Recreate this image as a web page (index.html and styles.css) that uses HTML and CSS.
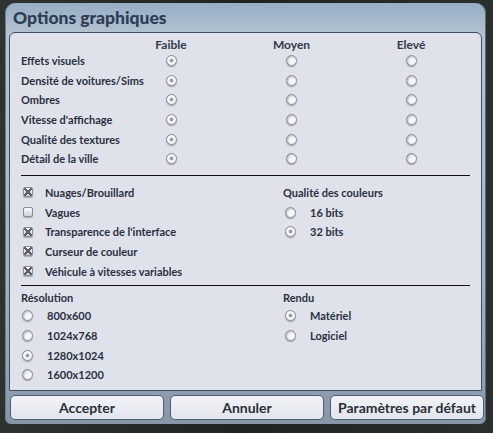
FILE: index.html
```html
<!DOCTYPE html>
<html lang="fr">
<head>
    <meta charset="UTF-8">
    <title>Options graphiques</title>
    <link rel="stylesheet" href="styles.css">
</head>
<body>
    <div class="window">
        <div class="frame">
            <h1 class="title">Options graphiques</h1>
            <div class="panel">
                <div class="quality">
                    <span></span>
                    <span class="colhead">Faible</span>
                    <span class="colhead">Moyen</span>
                    <span class="colhead">Elevé</span>

                    <span class="label">Effets visuels</span>
                    <span class="cell"><i class="radio on"></i></span>
                    <span class="cell"><i class="radio"></i></span>
                    <span class="cell"><i class="radio"></i></span>

                    <span class="label">Densité de voitures/Sims</span>
                    <span class="cell"><i class="radio on"></i></span>
                    <span class="cell"><i class="radio"></i></span>
                    <span class="cell"><i class="radio"></i></span>

                    <span class="label">Ombres</span>
                    <span class="cell"><i class="radio on"></i></span>
                    <span class="cell"><i class="radio"></i></span>
                    <span class="cell"><i class="radio"></i></span>

                    <span class="label">Vitesse d'affichage</span>
                    <span class="cell"><i class="radio on"></i></span>
                    <span class="cell"><i class="radio"></i></span>
                    <span class="cell"><i class="radio"></i></span>

                    <span class="label">Qualité des textures</span>
                    <span class="cell"><i class="radio on"></i></span>
                    <span class="cell"><i class="radio"></i></span>
                    <span class="cell"><i class="radio"></i></span>

                    <span class="label">Détail de la ville</span>
                    <span class="cell"><i class="radio on"></i></span>
                    <span class="cell"><i class="radio"></i></span>
                    <span class="cell"><i class="radio"></i></span>
                </div>

                <hr class="sep">

                <div class="split checks">
                    <div class="col">
                        <div class="row"><i class="box on"></i>Nuages/Brouillard</div>
                        <div class="row"><i class="box"></i>Vagues</div>
                        <div class="row"><i class="box on"></i>Transparence de l'interface</div>
                        <div class="row"><i class="box on"></i>Curseur de couleur</div>
                        <div class="row"><i class="box on"></i>Véhicule à vitesses variables</div>
                    </div>
                    <div class="col">
                        <div class="row">Qualité des couleurs</div>
                        <div class="row opt"><i class="radio"></i>16 bits</div>
                        <div class="row opt"><i class="radio on"></i>32 bits</div>
                    </div>
                </div>

                <hr class="sep sep-low">

                <div class="split lower">
                    <div class="col">
                        <div class="row head">Résolution</div>
                        <div class="row res"><i class="radio"></i>800x600</div>
                        <div class="row res"><i class="radio"></i>1024x768</div>
                        <div class="row res"><i class="radio on"></i>1280x1024</div>
                        <div class="row res"><i class="radio"></i>1600x1200</div>
                    </div>
                    <div class="col">
                        <div class="row head">Rendu</div>
                        <div class="row opt"><i class="radio on"></i>Matériel</div>
                        <div class="row opt"><i class="radio"></i>Logiciel</div>
                    </div>
                </div>
            </div>
            <div class="buttons">
                <button type="button">Accepter</button>
                <button type="button">Annuler</button>
                <button type="button">Paramètres par défaut</button>
            </div>
        </div>
    </div>
</body>
</html>
```

FILE: styles.css
```css
body {
    margin: 0;
    background: #232827;
    font-family: Lato, "Open Sans", sans-serif;
}

.window {
    width: 493px;
    height: 433px;
    padding-top: 3px;
    box-sizing: border-box;
    background: linear-gradient(to right, #2c3331, #1f2422 50%, #2a302e);
}

.frame {
    margin: 0 7px 0 5px;
    height: 421px;
    border-radius: 10px 10px 6px 6px;
    background: linear-gradient(#98aec3, #b4c4d2 8%, #a5b5c5 60%, #8797a9);
    box-shadow: inset 1px 0 0 #6c7d90, inset -1px 0 0 #5a6a7c;
}

.title {
    margin: 0;
    height: 29px;
    padding-left: 8px;
    font-size: 17.5px;
    line-height: 30px;
    font-weight: 900;
    color: #2d3c55;
}

.panel {
    margin: 0 4px;
    height: 359px;
    box-sizing: border-box;
    padding: 4px 11px 0 11px;
    border: 1px solid #3f4e64;
    border-radius: 6px 6px 0 0;
    background: #dfe2ea;
    color: #2a3042;
    font-size: 11px;
    font-weight: 700;
}

/* quality table */
.quality {
    display: grid;
    grid-template-columns: 90px 120px 121px 1fr;
    grid-template-rows: 14px;
    grid-auto-rows: 19.6px;
    align-items: center;
}

.colhead {
    text-align: center;
    font-size: 12px;
    color: #333a4a;
}

.label {
    white-space: nowrap;
}

.cell {
    display: flex;
    justify-content: center;
}

.radio {
    display: inline-block;
    flex: none;
    box-sizing: border-box;
    width: 11px;
    height: 11px;
    border: 1px solid #8c8f97;
    border-radius: 50%;
    background: radial-gradient(circle at 62% 62%, #f6f6f8 0 38%, #c2c5cb 70%, #a2a5ac 100%);
    box-shadow: 0 1px 1px rgba(0, 0, 0, 0.3);
}

.radio.on {
    background: radial-gradient(circle, #9a9da4 0 24%, #f7f7f9 36% 62%, #bec1c7 85%);
}

.sep {
    margin: 6px 0 0;
    border: none;
    height: 1px;
    background: #111;
}

.sep-low {
    margin-top: 4px;
}

.split {
    display: grid;
    grid-template-columns: 262px 1fr;
}

.checks {
    padding-top: 7px;
}

.lower {
    padding-top: 2px;
}

.row {
    display: flex;
    align-items: center;
    height: 19.7px;
    white-space: nowrap;
}

.row.head {
    height: 18px;
}

.box {
    width: 8px;
    height: 8px;
    margin: 0 12px 0 2px;
    border: 1px solid #8a8d95;
    border-radius: 2px;
    background: linear-gradient(#fbfbfc, #cdd0d6);
    box-shadow: 0 1px 1px rgba(0, 0, 0, 0.25);
}

.box.on {
    background:
        linear-gradient(45deg, transparent 40%, #5c5f67 40% 58%, transparent 58%),
        linear-gradient(-45deg, transparent 40%, #5c5f67 40% 58%, transparent 58%),
        linear-gradient(#fbfbfc, #cdd0d6);
}

.opt .radio {
    margin: 0 14px 0 2px;
}

.res .radio {
    margin: 0 14px 0 1px;
}

.buttons {
    display: flex;
    gap: 6px;
    padding: 4px 2px 0 5px;
}

button {
    flex: 1;
    height: 25px;
    border: 1px solid #4d5d73;
    border-radius: 5px;
    background: linear-gradient(#f0f2f6, #e2e6ed);
    font-family: Lato, "Open Sans", sans-serif;
    font-size: 14px;
    font-weight: 700;
    color: #2b2f38;
    cursor: pointer;
    padding: 0;
}
```
